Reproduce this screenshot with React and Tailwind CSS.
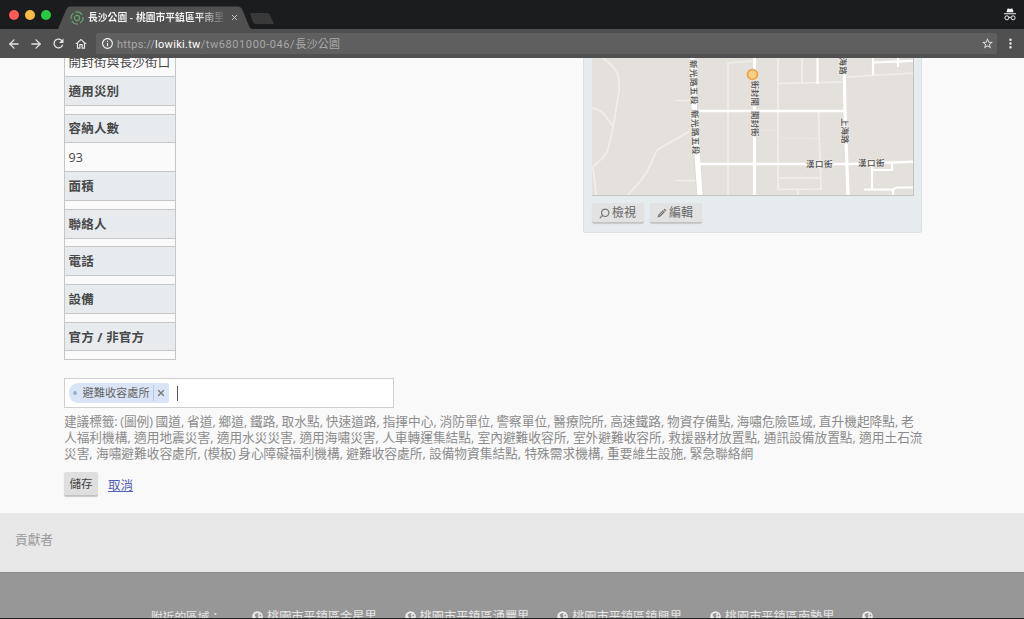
import React from 'react';
import { ArrowLeft, ArrowRight, X } from 'lucide-react';
import { MdRefresh, MdOutlineHome, MdInfoOutline, MdStarBorder, MdMoreVert } from 'react-icons/md';

const cjk = "font-['Open_Sans','Noto_Sans_CJK_TC',sans-serif]";

function Browser() {
  return (
    <header className="h-[58px] shrink-0 bg-[#1b1c1e] font-['Roboto','Noto_Sans_CJK_TC',sans-serif]">
      <div className="flex h-[29px] items-start">
        <div className="flex h-[29px] w-[58px] shrink-0 items-center gap-[6px] pl-[9px]">
          <span className="size-[10px] rounded-full bg-[#fc5b57]" />
          <span className="size-[10px] rounded-full bg-[#fdbc40]" />
          <span className="size-[10px] rounded-full bg-[#28c940]" />
        </div>
        <div className="relative h-[29px] w-[194px] shrink-0">
          <svg className="absolute inset-0" width="194" height="29" viewBox="0 0 194 29">
            <path d="M0 29 L8 10 Q9.500 6.500 12 6.500 H180 Q183 6.500 184.500 10 L191 26 Q192 29 194 29Z" fill="#505050" />
          </svg>
          <div className="relative flex h-[29px] items-center pt-[6px] pl-[12px]">
            <svg width="14" height="14" viewBox="0 0 14 14" fill="none" stroke="#62a66c" strokeWidth="1.200">
              <circle cx="7" cy="7" r="2.600" />
              <path d="M5 1.300A6 6 0 0 1 12.200 4M12.900 6A6 6 0 0 1 10 12M8 12.900A6 6 0 0 1 1.800 10M1.100 8A6 6 0 0 1 3.300 2.300" />
            </svg>
            <span className="ml-[4px] w-[136px] bg-linear-to-r from-[#f4f4f4] from-80% to-[#606060] bg-clip-text text-[9.800px] leading-[16px] font-bold whitespace-nowrap text-transparent">長沙公園 - 桃園市平鎮區平南里</span>
            <X className="ml-[6px] text-[#d0d0d0]" size={9} strokeWidth={2.500} />
          </div>
        </div>
        <svg className="-ml-[4px]" width="28" height="29" viewBox="0 0 28 29"><path d="M2 13H19Q21 13 22 15L26 24H8Q6 24 5 22Z" fill="#393939" /></svg>
        <svg className="mt-[8px] mr-[8px] ml-auto" width="12" height="13" viewBox="0 0 12 13" fill="none">
          <path d="M2.500 4.300L3.400.800Q3.700.200 4.400.500L6 .900 7.600.500Q8.300.200 8.600.800L9.500 4.300ZM0 5.200H12V6.200H0Z" fill="#f2f2f2" />
          <circle cx="2.900" cy="9.800" r="2" stroke="#f2f2f2" />
          <circle cx="9.100" cy="9.800" r="2" stroke="#f2f2f2" />
          <path d="M4.900 9.500Q6 8.800 7.100 9.500" stroke="#f2f2f2" />
        </svg>
      </div>
      <div className="flex h-[29px] items-center bg-[#505050] text-[#e4e4e4]">
        <ArrowLeft className="ml-[7px]" size={14} strokeWidth={2.200} />
        <ArrowRight className="ml-[8px]" size={14} strokeWidth={2.200} />
        <MdRefresh className="ml-[8px]" size={15} />
        <MdOutlineHome className="ml-[8px]" size={14} />
        <div className="ml-[8px] flex h-[21px] w-[901px] items-center rounded-[2px] bg-[#5f5f5f] pl-[4.500px]">
          <MdInfoOutline size={13} color="#f4f4f4" />
          <span className="ml-[3.500px] pt-[3px] text-[11px] tracking-[0.300px] whitespace-nowrap text-[#a9a9a9]">https://<span className="text-white">lowiki.tw</span><span className="tracking-[0.580px]">/tw6801000-046/</span>長沙公園</span>
          <MdStarBorder className="mr-[3px] ml-auto" size={13} />
        </div>
        <MdMoreVert className="ml-[6px]" size={15} />
      </div>
    </header>
  );
}

const Head = ({ children }) => (
  <div className="flex h-[29px] items-center border-t border-[#c4c6c8] bg-[#e7ebee] pt-[2px] pl-[3.500px] font-bold tracking-[0.200px]">{children}</div>
);
const Blank = () => <div className="h-[8.600px] border-t border-[#c4c6c8] bg-[#fbfafa]" />;

function Details() {
  return (
    <div className="flex h-[302px] w-[112px] flex-col border-x border-b border-[#c4c6c8] text-[12.500px] leading-[18px] text-[#484848]">
      <div className="flex h-[18px] items-end overflow-hidden bg-[#fbfafa] pl-[3.500px] tracking-[0.250px] whitespace-nowrap"><span className="mb-[4px]">開封街與長沙街口</span></div>
      <Head>適用災別</Head><Blank />
      <Head>容納人數</Head>
      <div className="flex h-[29px] items-center border-t border-[#c4c6c8] bg-[#fbfafa] pt-[2px] pl-[3.500px]">93</div>
      <Head>面積</Head><Blank />
      <Head>聯絡人</Head><Blank />
      <Head>電話</Head><Blank />
      <Head>設備</Head><Blank />
      <Head>官方 / 非官方</Head><Blank />
    </div>
  );
}

function RoadMap() {
  return (
    <svg className="box-content block border-r border-b border-[#c3c3c3]" width="321" height="136.500" viewBox="592 58 321 136.500">
      <rect x="592" y="58" width="322" height="137" fill="#e4e0db" />
      <g fill="none" stroke="#f0eeec" strokeWidth="1.700">
        <path d="M603 58Q615 67 618 75Q621 85 617 103Q614 128 607 152Q604 157 593 167Q595 182 596 195" />
        <path d="M592 108Q599 109 603 113L613 126M690 131L657 150L647 172L641 180L628 195" />
        <path d="M676 100.500H690M676 180.500H697M752 61L728 63V195" />
        <path d="M778 58V189.500L821 189L818.500 112M778 178H821M798 190V195M778 83.500L842 82M847 77L913 73M802 58V83" />
        <path d="M755 130.500L778 130M780 138L819 138.500" strokeWidth="1" opacity=".6" />
      </g>
      <g fill="none" stroke="#fff">
        <path d="M692.500 58L694 102L697 152L700 195" stroke="#dad6d2" strokeWidth="7" />
        <path d="M692.500 58L694 102L697 152L700 195" strokeWidth="5.500" />
        <path d="M754.500 58V195M844 58L845 112L848 195" strokeWidth="3.200" />
        <path d="M698 111H845" strokeWidth="2.400" />
        <path d="M700 164H850L913 161.800" strokeWidth="2.400" />
        <path d="M817.500 58V84M873 58V75M873 62.500L913 60.800M898 58V67M872 164V189M872 170H892V163M864 189.500H893L897 187.500H913M893 189.500V195" strokeWidth="2.200" />
      </g>
      <g fill="#505050" stroke="#eeece9" strokeWidth="1.400" paintOrder="stroke" fontSize="8.500" fontWeight="500" className="font-['Noto_Sans_CJK_TC',sans-serif]">
        <text transform="translate(690 60) rotate(88.500)" letterSpacing=".5">新光路五段</text>
        <text transform="translate(691.500 110) rotate(88.500)" letterSpacing=".5">新光路五段</text>
        <text transform="translate(752 80.500) rotate(90)">街封開</text>
        <text transform="translate(751.500 111) rotate(90)">開封街</text>
        <text transform="translate(839.500 48.500) rotate(89)" letterSpacing=".4">上海路</text>
        <text transform="translate(841.500 118) rotate(89)">上海路</text>
        <text x="806" y="167" letterSpacing=".5">漢口街</text>
        <text x="858" y="166" letterSpacing=".5">漢口街</text>
      </g>
      <circle cx="752.500" cy="74.500" r="5" fill="#f7cf87" stroke="#e9a23c" strokeWidth="1.600" />
    </svg>
  );
}

const toolButton = 'flex h-[20px] w-[52px] items-center rounded-[2px] border-b border-[#c2c2c2] bg-[#e2e2e2] pt-px pl-[7px] shadow-[0_1px_1px_#c8c8c8]';

function MapCard() {
  return (
    <aside className="h-[175px] w-[339px] rounded-b-[3px] border border-t-0 border-[#dbe1e5] bg-[#e6ebee] pl-[8px]">
      <RoadMap />
      <div className="mt-[7.500px] flex gap-[6px] text-[12px] text-[#666]">
        <span className={`${toolButton} gap-[2px]`}>
          <svg width="11" height="11" viewBox="0 0 11 11" fill="none" stroke="#777" strokeWidth="1.200"><circle cx="6.200" cy="4.800" r="3.700" /><path d="M3.500 7.500L.800 10.200" /></svg>檢視
        </span>
        <span className={`${toolButton} gap-[2px]`}>
          <svg width="10" height="10" viewBox="0 0 10 10"><path d="M.500 9.500L1.300 6.700 6 2 8 4 3.300 8.700ZM6.600 1.400L7.500.500 9.500 2.500 8.600 3.400Z" fill="#777" /><path d="M2.500 7.500L6.500 3.500" stroke="#ddd" strokeWidth=".6" /></svg>編輯
        </span>
      </div>
    </aside>
  );
}

const Globe = () => (
  <svg className="-mt-px shrink-0" width="11" height="11" viewBox="0 0 11 11"><circle cx="5.500" cy="5.500" r="5.300" fill="#ececec" /><path d="M2.500 3.500L5 2 7 2.500 5.500 4 7 4.800 5 8 3.500 6ZM8 3L9.500 4.500 8.500 6 7.500 4.500Z" fill="#979797" /></svg>
);

export default function App() {
  const areas = ['桃園市平鎮區金星里', '桃園市平鎮區湧豐里', '桃園市平鎮區鎮興里', '桃園市平鎮區南勢里', '\u00a0'];
  return (
    <div className={`flex h-[619px] w-[1024px] flex-col overflow-hidden bg-[#f9f9f9] ${cjk}`}>
      <Browser />
      <main className="h-[455px] shrink-0 pr-[102px] pl-[64px]">
        <div className="flex h-[320px] items-start justify-between"><Details /><MapCard /></div>
        <div className="flex h-[30px] w-[330px] items-center border border-[#cfcfcf] bg-white pl-[3.500px]">
          <div className="flex h-[20px] w-[100px] items-center rounded-l-[9px] rounded-r-[2px] bg-[#dae4f7] text-[11.200px] text-[#666]">
            <span className="ml-[4px] size-[4px] rounded-full bg-[#9aafd0]" />
            <span className="ml-[6px] pt-px whitespace-nowrap">避難收容處所</span>
            <span className="ml-auto flex h-[16px] w-[16px] items-center justify-center border-l border-[#b8c6df]"><X size={10} strokeWidth={3} color="#777" /></span>
          </div>
          <span className="ml-[8px] h-[15px] w-px bg-[#555]" />
        </div>
        <p className="mt-[5px] text-[12.700px] leading-[16px] whitespace-nowrap text-[#8c8c8c]">
          <span className="[word-spacing:-0.450px]"><span className="tracking-[-0.100px]">建議標籤: (圖例) </span>國道, 省道, 鄉道, 鐵路, 取水點, 快速道路, 指揮中心, 消防單位, 警察單位, 醫療院所, 高速鐵路, 物資存備點, 海嘯危險區域, 直升機起降點, 老</span><br />
          人福利機構, 適用地震災害, 適用水災災害, 適用海嘯災害, 人車轉運集結點, 室內避難收容所, 室外避難收容所, 救援器材放置點, 通訊設備放置點, 適用土石流<br />
          災害, 海嘯避難收容處所, <span className="tracking-[-0.400px]">(模板) </span>身心障礙福利機構, 避難收容處所, 設備物資集結點, 特殊需求機構, 重要維生設施, 緊急聯絡網
        </p>
        <div className="mt-[11px] flex items-center text-[12.500px] leading-[18px]">
          <button className="h-[24px] w-[34px] rounded-[2px] border-b border-[#c2c2c2] bg-[#dfdfdf] text-[11.500px] text-[#444] shadow-[0_1px_1px_#c8c8c8]">儲存</button>
          <a className="mt-[3px] ml-[10px] text-[#5560b8] underline">取消</a>
        </div>
      </main>
      <section className="h-[59px] shrink-0 bg-[#e8e8e8] pt-[17px] pl-[15px] text-[12.700px] leading-[18px] text-[#999]">貢獻者</section>
      <footer className="flex h-[46px] shrink-0 items-start overflow-hidden border-t border-[#8e8e8e] bg-[#979797] pt-[35px] pl-[151px] text-[12.200px] leading-[18px] whitespace-nowrap text-[#e6e6e6]">
        <span className="-mt-px w-[101px] shrink-0 text-[11.700px]">附近的區域：</span>
        {areas.map((name, i) => (
          <span key={i} className="flex w-[152.600px] shrink-0 items-center gap-[4px]"><Globe />{name}</span>
        ))}
      </footer>
      <div className="h-px shrink-0 bg-[#222]" />
    </div>
  );
}
